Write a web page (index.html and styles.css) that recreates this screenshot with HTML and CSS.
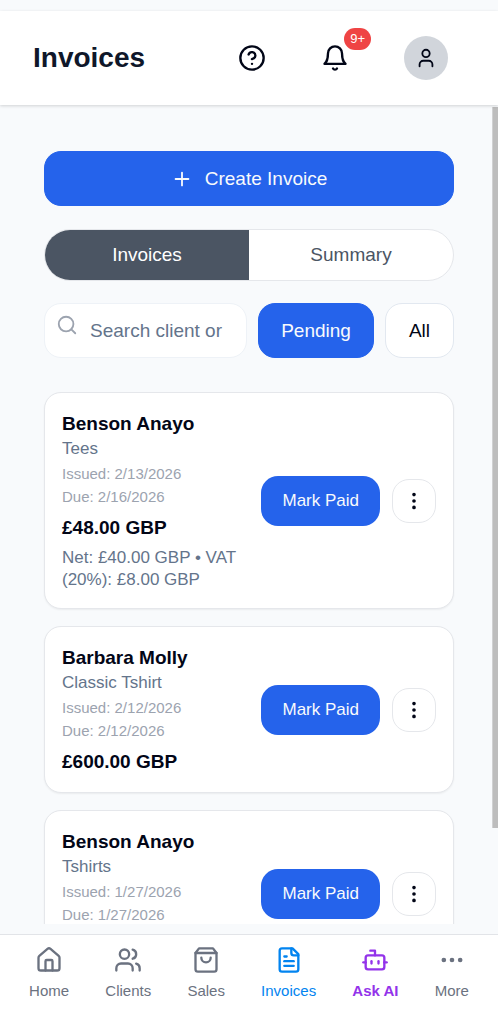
FILE: index.html
```html
<!DOCTYPE html>
<html lang="en">
<head>
  <meta charset="utf-8">
  <meta name="viewport" content="width=device-width, initial-scale=1">
  <title>Invoices</title>
  <link rel="stylesheet" href="styles.css">
</head>
<body>
  <svg class="sprite" aria-hidden="true">
    <symbol id="dots-vertical" viewBox="0 0 24 24"><circle cx="12" cy="12" r="1"/><circle cx="12" cy="5" r="1"/><circle cx="12" cy="19" r="1"/></symbol>
  </svg>

  <header class="header">
    <h1 class="title">Invoices</h1>
    <div class="header-actions">
      <button class="icon-button" type="button" aria-label="Help">
        <svg class="icon icon-lg" viewBox="0 0 24 24"><circle cx="12" cy="12" r="10"/><path d="M9.09 9a3 3 0 0 1 5.83 1c0 2-3 3-3 3"/><path d="M12 17h.01"/></svg>
      </button>
      <button class="icon-button bell" type="button" aria-label="Notifications">
        <svg class="icon icon-lg" viewBox="0 0 24 24"><path d="M6 8a6 6 0 0 1 12 0c0 7 3 9 3 9H3s3-2 3-9"/><path d="M10.3 21a1.94 1.94 0 0 0 3.4 0"/></svg>
        <span class="badge">9+</span>
      </button>
      <button class="icon-button avatar" type="button" aria-label="Account">
        <svg class="icon" viewBox="0 0 24 24"><path d="M19 21v-2a4 4 0 0 0-4-4H9a4 4 0 0 0-4 4v2"/><circle cx="12" cy="7" r="4"/></svg>
      </button>
    </div>
  </header>

  <div class="viewport">
    <main class="content">
      <button class="button primary create" type="button">
        <svg class="icon" viewBox="0 0 24 24"><path d="M5 12h14"/><path d="M12 5v14"/></svg>
        Create Invoice
      </button>

      <div class="tabs" role="tablist">
        <button class="tab active" type="button" role="tab" aria-selected="true">Invoices</button>
        <button class="tab" type="button" role="tab" aria-selected="false">Summary</button>
      </div>

      <div class="filters">
        <div class="search">
          <svg class="icon search-icon" viewBox="0 0 24 24"><circle cx="11" cy="11" r="8"/><path d="m21 21-4.3-4.3"/></svg>
          <input class="search-input" type="text" placeholder="Search client or" aria-label="Search client or">
        </div>
        <button class="button primary" type="button">Pending</button>
        <button class="button outline" type="button">All</button>
      </div>

      <section class="invoice-list" aria-label="Invoice list">
        <article class="card">
          <div class="details">
            <h2 class="client">Benson Anayo</h2>
            <p class="product">Tees</p>
            <p class="dates">Issued: 2/13/2026<br>Due: 2/16/2026</p>
            <p class="amount">£48.00 GBP</p>
            <p class="tax">Net: £40.00 GBP • VAT (20%): £8.00 GBP</p>
          </div>
          <div class="card-actions">
            <button class="mark-paid" type="button">Mark Paid</button>
            <button class="menu" type="button" aria-label="More actions"><svg class="icon"><use href="#dots-vertical"/></svg></button>
          </div>
        </article>

        <article class="card">
          <div class="details">
            <h2 class="client">Barbara Molly</h2>
            <p class="product">Classic Tshirt</p>
            <p class="dates">Issued: 2/12/2026<br>Due: 2/12/2026</p>
            <p class="amount">£600.00 GBP</p>
          </div>
          <div class="card-actions">
            <button class="mark-paid" type="button">Mark Paid</button>
            <button class="menu" type="button" aria-label="More actions"><svg class="icon"><use href="#dots-vertical"/></svg></button>
          </div>
        </article>

        <article class="card">
          <div class="details">
            <h2 class="client">Benson Anayo</h2>
            <p class="product">Tshirts</p>
            <p class="dates">Issued: 1/27/2026<br>Due: 1/27/2026</p>
            <p class="amount">&nbsp;</p>
          </div>
          <div class="card-actions">
            <button class="mark-paid" type="button">Mark Paid</button>
            <button class="menu" type="button" aria-label="More actions"><svg class="icon"><use href="#dots-vertical"/></svg></button>
          </div>
        </article>
      </section>
    </main>
    <div class="scroll-thumb" aria-hidden="true"></div>
  </div>

  <nav class="bottom-nav" aria-label="Main">
    <a class="nav-item" href="#home">
      <svg class="icon icon-lg" viewBox="0 0 24 24"><path d="M15 21v-8a1 1 0 0 0-1-1h-4a1 1 0 0 0-1 1v8"/><path d="M3 10a2 2 0 0 1 .709-1.528l7-5.999a2 2 0 0 1 2.582 0l7 5.999A2 2 0 0 1 21 10v9a2 2 0 0 1-2 2H5a2 2 0 0 1-2-2z"/></svg>
      Home
    </a>
    <a class="nav-item" href="#clients">
      <svg class="icon icon-lg" viewBox="0 0 24 24"><path d="M16 21v-2a4 4 0 0 0-4-4H6a4 4 0 0 0-4 4v2"/><circle cx="9" cy="7" r="4"/><path d="M22 21v-2a4 4 0 0 0-3-3.87"/><path d="M16 3.13a4 4 0 0 1 0 7.75"/></svg>
      Clients
    </a>
    <a class="nav-item" href="#sales">
      <svg class="icon icon-lg" viewBox="0 0 24 24"><path d="M6 2 3 6v14a2 2 0 0 0 2 2h14a2 2 0 0 0 2-2V6l-3-4Z"/><path d="M3 6h18"/><path d="M16 10a4 4 0 0 1-8 0"/></svg>
      Sales
    </a>
    <a class="nav-item current" href="#invoices" aria-current="page">
      <svg class="icon icon-lg" viewBox="0 0 24 24"><path d="M15 2H6a2 2 0 0 0-2 2v16a2 2 0 0 0 2 2h12a2 2 0 0 0 2-2V7Z"/><path d="M14 2v4a2 2 0 0 0 2 2h4"/><path d="M10 9H8"/><path d="M16 13H8"/><path d="M16 17H8"/></svg>
      Invoices
    </a>
    <a class="nav-item assistant" href="#ask-ai">
      <svg class="icon icon-lg" viewBox="0 0 24 24"><path d="M12 8V4H8"/><rect width="16" height="12" x="4" y="8" rx="2"/><path d="M2 14h2"/><path d="M20 14h2"/><path d="M15 13v2"/><path d="M9 13v2"/></svg>
      Ask AI
    </a>
    <a class="nav-item" href="#more">
      <svg class="icon icon-lg" viewBox="0 0 24 24"><circle cx="12" cy="12" r="1"/><circle cx="19" cy="12" r="1"/><circle cx="5" cy="12" r="1"/></svg>
      More
    </a>
  </nav>
</body>
</html>
```
FILE: styles.css
```css
*,
*::before,
*::after {
  box-sizing: border-box;
}

body {
  display: flex;
  flex-direction: column;
  height: 100vh;
  margin: 0;
  padding-top: 11px;
  background: #f8fafc;
  color: #020617;
  font-family: "Liberation Sans", Arial, sans-serif;
  font-size: 19px;
}

h1,
h2,
p {
  margin: 0;
}

button,
input {
  margin: 0;
  padding: 0;
  border: 0;
  background: none;
  color: inherit;
  font: inherit;
}

button {
  cursor: pointer;
}

.sprite {
  position: absolute;
  width: 0;
  height: 0;
}

.icon {
  flex: none;
  display: block;
  width: 22px;
  height: 22px;
  fill: none;
  stroke: currentColor;
  stroke-width: 2;
  stroke-linecap: round;
  stroke-linejoin: round;
}

.icon-lg {
  width: 28px;
  height: 28px;
}

/* Header */
.header {
  z-index: 1;
  flex: none;
  display: flex;
  align-items: center;
  justify-content: space-between;
  padding: 25px 50px 25px 33px;
  background: #fff;
  box-shadow: 0 1px 3px rgba(0, 0, 0, 0.16);
}

.title {
  color: #0f172a;
  font-size: 28px;
  line-height: 34px;
}

.header-actions {
  display: flex;
  gap: 39px;
}

.icon-button {
  position: relative;
  display: grid;
  place-items: center;
  width: 44px;
  height: 44px;
}

.bell {
  margin-right: 8px;
}

.badge {
  position: absolute;
  top: -8px;
  right: -14px;
  padding: 0 6px;
  border-radius: 11px;
  background: #ef4444;
  color: #fff;
  font-size: 13px;
  line-height: 22px;
}

.avatar {
  border-radius: 50%;
  background: #d1d5db;
}

/* Scrolling page area */
.viewport {
  position: relative;
  flex: 1;
  min-height: 0;
  padding-bottom: 10px;
}

.content {
  height: 100%;
  padding: 46px 44px 18px;
  overflow-y: auto;
  scrollbar-width: none;
}

.scroll-thumb {
  position: absolute;
  top: 2px;
  right: 0;
  width: 6px;
  height: 87%;
  border-left: 1px solid #d0d1d2;
  background: #bdbdbd;
}

.button {
  display: flex;
  align-items: center;
  justify-content: center;
  height: 55px;
  padding: 0 22px;
  border: 1px solid #e2e8f0;
  border-radius: 17px;
}

.primary {
  border-color: #2563eb;
  background: #2563eb;
  color: #f8fafc;
}

.outline {
  padding: 0 23px;
  background: #fff;
}

.create {
  gap: 12px;
  width: 100%;
}

.tabs {
  display: flex;
  height: 52px;
  margin: 23px 0 22px;
  overflow: hidden;
  border: 1px solid #e5e7eb;
  border-radius: 26px;
  background: #fff;
}

.tab {
  flex: 1;
  color: #4b5563;
}

.tab.active {
  background: #4b5563;
  color: #fff;
}

.filters {
  display: flex;
  gap: 11px;
  margin-bottom: 34px;
}

.search {
  position: relative;
  flex: 1;
  min-width: 0;
}

.search-icon {
  position: absolute;
  top: 11px;
  left: 12px;
  color: #9ca3af;
}

.search-input {
  width: 100%;
  height: 55px;
  padding: 0 20px 0 45px;
  border: 1px solid #eef2f7;
  border-radius: 17px;
  background: #fff;
}

.search-input::placeholder {
  color: #64748b;
  opacity: 1;
}

/* Invoice cards */
.invoice-list {
  display: flex;
  flex-direction: column;
  gap: 17px;
}

.card {
  display: flex;
  align-items: center;
  gap: 12px;
  padding: 18px 17px 17px;
  border: 1px solid #e5e7eb;
  border-radius: 17px;
  background: #fff;
  box-shadow: 0 1px 2px rgba(0, 0, 0, 0.06);
}

.details {
  flex: 1;
  min-width: 0;
}

.client,
.amount {
  font-size: 19px;
  font-weight: 700;
  line-height: 26px;
}

.product {
  color: #64748b;
  font-size: 17px;
  line-height: 24px;
}

.dates {
  margin: 1px 0 7px;
  color: #9ca3af;
  font-size: 15px;
  line-height: 23px;
}

.tax {
  margin-top: 6px;
  color: #64748b;
  font-size: 17px;
  line-height: 22px;
}

.card-actions {
  flex: none;
  display: flex;
  align-items: center;
  gap: 12px;
}

.mark-paid {
  height: 50px;
  padding: 0 21px;
  border-radius: 17px;
  background: #2563eb;
  color: #f8fafc;
  font-size: 17px;
}

.menu {
  display: grid;
  place-items: center;
  width: 44px;
  height: 44px;
  border: 1px solid #e5e7eb;
  border-radius: 17px;
}

/* Bottom navigation */
.bottom-nav {
  flex: none;
  display: flex;
  justify-content: space-around;
  padding: 11px 11px 22px;
  border-top: 1px solid #e2e4e8;
  background: #fff;
}

.nav-item {
  display: flex;
  flex-direction: column;
  align-items: center;
  gap: 6px;
  color: #6b7280;
  font-size: 15px;
  line-height: 22px;
  text-decoration: none;
}

.nav-item.current {
  color: #0284f0;
}

.nav-item.assistant {
  color: #9333ea;
  font-weight: 700;
}
```
